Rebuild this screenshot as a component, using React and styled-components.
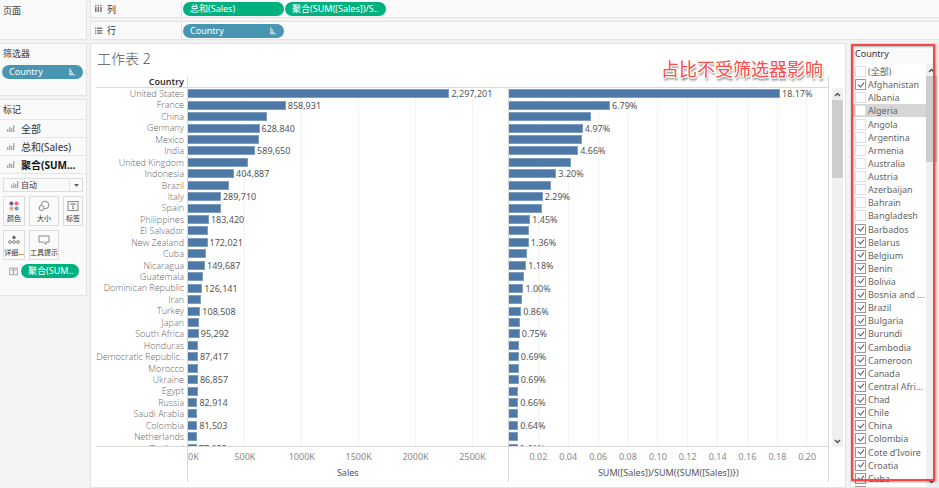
import React, { useState } from 'react';
import styled, { createGlobalStyle } from 'styled-components';

const GlobalStyle = createGlobalStyle`
	* {
		box-sizing: border-box;
	}
	body {
		margin: 0;
		background: #f3f3f3;
		font-family: 'Noto Sans', 'Noto Sans CJK SC', sans-serif;
		font-size: 9px;
		color: #333;
	}
	button, select, input {
		font: inherit;
		color: inherit;
		margin: 0;
	}
`;

const Workbook = styled.div`
	display: grid;
	grid-template-columns: 87px minmax(0, 1fr);
	gap: 3px;
	height: 100vh;
	overflow: hidden;
`;

const Sidebar = styled.aside`
	display: flex;
	flex-direction: column;
	gap: 3px;
`;

const Card = styled.section`
	background: #fafafa;
	border: 1px solid #e3e3e3;
	border-left: none;
	border-top-color: ${(props) => (props.$first ? 'transparent' : '#e3e3e3')};
	min-height: ${(props) => props.$height}px;
`;

const CardTitle = styled.h2`
	margin: 0;
	padding: 0 3px;
	font-size: 9px;
	font-weight: 400;
	line-height: 19px;
`;

const Pill = styled.button`
	display: flex;
	align-items: center;
	justify-content: space-between;
	width: ${(props) => props.$width}px;
	height: 14px;
	padding: 0 7px;
	border: none;
	border-radius: 7px;
	background: ${(props) => (props.$measure ? '#00b180' : '#4996b2')};
	color: #fff;
	font-size: 9px;
	line-height: 14px;
	white-space: nowrap;
`;

const FilterPillRow = styled.div`
	padding: 2px;
`;

const MarkLayer = styled.button`
	display: flex;
	align-items: center;
	gap: 6px;
	width: 100%;
	height: 18px;
	padding: 0 7px;
	border: none;
	border-top: 1px solid #e6e6e6;
	background: none;
	font-size: 10px;
	font-weight: ${(props) => (props.$active ? 700 : 400)};
	color: ${(props) => (props.$active ? '#111' : '#333')};
	white-space: nowrap;
`;

const MarkTools = styled.div`
	display: flex;
	flex-direction: column;
	gap: 4px;
	padding: 4px 3px;
	border-top: 1px solid #e6e6e6;
`;

const SelectBox = styled.label`
	position: relative;
	display: block;
	height: 14px;
	border: 1px solid #ddd;
	background: #fafafa;

	select {
		display: block;
		width: 100%;
		height: 12px;
		padding: 0 0 0 17px;
		border: none;
		background: none;
		appearance: none;
		font-size: 8px;
		line-height: 12px;
	}
`;

const SelectIcon = styled.span`
	position: absolute;
	top: 2px;
	left: 7px;
	display: flex;
	pointer-events: none;
`;

const SelectArrow = styled.span`
	position: absolute;
	top: 0;
	right: 0;
	display: flex;
	align-items: center;
	justify-content: center;
	width: 13px;
	height: 12px;
	border-left: 1px solid #e3e3e3;
	pointer-events: none;
`;

const ToolGrid = styled.div`
	display: grid;
	grid-template-columns: 22px 30px 20px;
	gap: 4px;
`;

const ToolButton = styled.button`
	display: flex;
	flex-direction: column;
	align-items: center;
	justify-content: space-between;
	height: 30px;
	padding: 3px 0 0;
	border: 1px solid #ddd;
	background: #fafafa;
	font-size: 7px;
	line-height: 12px;
	white-space: nowrap;
`;

const MarkPillRow = styled.div`
	display: flex;
	align-items: center;
	gap: 3px;
	padding-left: 6px;
`;

const Workspace = styled.div`
	display: flex;
	flex-direction: column;
	gap: 3px;
	min-width: 0;
	min-height: 0;
`;

const Shelf = styled.div`
	display: flex;
	align-items: center;
	gap: 1px;
	height: ${(props) => props.$height}px;
	flex-shrink: 0;
	background: #fafafa;
	border: 1px solid #e3e3e3;
	border-right: none;
	border-top-color: ${(props) => (props.$first ? 'transparent' : '#e3e3e3')};
`;

const ShelfName = styled.div`
	display: flex;
	align-items: center;
	gap: 4px;
	width: 91px;
	align-self: stretch;
	padding-left: 4px;
	border-right: 1px solid #e3e3e3;
`;

const Body = styled.div`
	display: grid;
	grid-template-columns: minmax(0, 1fr) 88px;
	gap: 4px;
	flex: 1;
	min-height: 0;
	padding-right: 1px;
`;

const Sheet = styled.main`
	position: relative;
	display: flex;
	flex-direction: column;
	min-height: 0;
	padding: 5px 2px 5px 5px;
	background: #fff;
	border: 1px solid #e3e3e3;
`;

const SheetTitle = styled.h1`
	margin: 0;
	padding-left: 1px;
	font-size: 14px;
	font-weight: 300;
	line-height: 20px;
	color: #555;
`;

const Annotation = styled.div`
	position: absolute;
	top: 12px;
	right: 22px;
	font-size: 18px;
	line-height: 26px;
	color: #fb4b4b;
	text-shadow: -1px -1px 0 #fff, 1px -1px 0 #fff, -1px 1px 0 #fff,
		1px 1px 0 #fff, 1px 3px 2px #777;
`;

const Chart = styled.div`
	display: grid;
	grid-template-columns: 92px minmax(0, 1fr) minmax(0, 1fr) 14px;
	grid-template-rows: 12px minmax(0, 1fr) 35px;
	flex: 1;
	min-height: 0;
	margin-top: 7px;
`;

const HeadCell = styled.div`
	padding-right: 3px;
	border-right: ${(props) => (props.$line ? '1px solid #d9d9d9' : 'none')};
	border-bottom: 1px solid #d9d9d9;
	font-weight: 600;
	line-height: 12px;
	text-align: right;
`;

const Pane = styled.div`
	overflow: hidden;
	border-right: 1px solid #d9d9d9;
	border-bottom: 1px solid #d9d9d9;
	background: ${(props) =>
		props.$step
			? `repeating-linear-gradient(to right, transparent 0 calc(${props.$step}% - 1px), #f3f3f3 calc(${props.$step}% - 1px) ${props.$step}%)`
			: 'none'};
`;

const Rows = styled.div`
	display: grid;
	grid-template-columns: minmax(0, 1fr);
	grid-template-rows: repeat(32, 1fr);
	height: 366px;
`;

const RowName = styled.div`
	display: flex;
	justify-content: flex-end;
	min-height: 0;
	padding-right: 3px;
	font-family: 'Open Sans', 'Noto Sans', sans-serif;
	font-weight: 300;
	line-height: 12px;
	white-space: nowrap;
	color: #666;
`;

const BarRow = styled.div`
	display: flex;
	align-items: center;
	gap: 2px;
	min-height: 0;
	line-height: 11px;
	color: #555;
`;

const Bar = styled.div`
	height: 9px;
	background: #4e79a7;
	border: 1px solid #7f9fc2;
	border-left: none;
`;

const AxisCell = styled.div`
	border-right: 1px solid #d9d9d9;
	text-align: center;
	line-height: 12px;
	color: #555;
`;

const Ticks = styled.div`
	display: flex;
	padding: 4px 0;
	color: #8a8a8a;
`;

const Tick = styled.span`
	flex: 0 0 ${(props) => props.$size}%;
	display: flex;
	justify-content: ${(props) => (props.$start ? 'flex-start' : 'center')};
`;

const ScrollTrack = styled.div`
	display: flex;
	flex-direction: column;
	justify-content: space-between;
	align-items: center;
	width: 11px;
	justify-self: end;
	background: #f0f0f0;
`;

const ScrollThumb = styled.div`
	width: 100%;
	height: ${(props) => props.$height}px;
	background: #cdcdcd;
`;

const ScrollButton = styled.button`
	display: flex;
	align-items: center;
	justify-content: center;
	width: 100%;
	height: 12px;
	padding: 0;
	border: none;
	background: none;
`;

const FilterPanel = styled.aside`
	position: relative;
	display: flex;
	flex-direction: column;
	min-height: 0;
	background: #fff;
	border: 1px solid #e3e3e3;
`;

const FilterTitle = styled.h2`
	margin: 0;
	padding: 0 4px;
	background: #fafafa;
	font-size: 9px;
	font-weight: 400;
	line-height: 20px;
`;

const FilterBody = styled.div`
	display: flex;
	flex: 1;
	min-height: 0;
	overflow: hidden;
`;

const FilterList = styled.div`
	display: grid;
	grid-template-columns: minmax(0, 1fr);
	grid-template-rows: repeat(33, 1fr);
	flex: 1;
	min-width: 0;
	height: 434px;
	padding-top: 1px;
`;

const FilterItem = styled.label`
	display: flex;
	align-items: center;
	gap: 2px;
	min-height: 0;
	padding-left: 4px;
	line-height: 13px;
	white-space: nowrap;
	color: #666;
	background: ${(props) => (props.$hover ? '#d6d6d6' : 'transparent')};
`;

const CheckBox = styled.input`
	display: flex;
	align-items: center;
	justify-content: center;
	width: 11px;
	height: 11px;
	appearance: none;
	background: #fff;
	border: 1px solid #e0e0e0;

	&:checked {
		border-color: #999;
	}
	&:checked::after {
		content: '';
		width: 3px;
		height: 5px;
		margin-bottom: 2px;
		border: solid #555;
		border-width: 0 1px 1px 0;
		transform: rotate(40deg);
	}
`;

const RedFrame = styled.div`
	position: absolute;
	top: 0;
	left: 0;
	right: 2px;
	bottom: 6px;
	border: 2px solid #f4484a;
	box-shadow: 1px 1px 2px rgba(0, 0, 0, 0.4),
		inset 1px 1px 2px rgba(0, 0, 0, 0.3);
	pointer-events: none;
`;

const BarsIcon = () => (
	<svg width="8" height="8" viewBox="0 0 8 8" fill="#aaa">
		<rect x="0" y="4" width="1.4" height="3" />
		<rect x="2" y="2" width="1.4" height="5" />
		<rect x="4" y="3" width="1.4" height="4" />
		<rect x="6" y="0" width="1.4" height="7" />
	</svg>
);

const ColumnsIcon = () => (
	<svg width="8" height="8" viewBox="0 0 8 8" fill="#777">
		{[0, 2.6, 5.2].map((x) => (
			<g key={x}>
				<rect x={x} y="0" width="1.5" height="1.2" />
				<rect x={x} y="2" width="1.5" height="5" />
			</g>
		))}
	</svg>
);

const RowsIcon = () => (
	<svg width="8" height="8" viewBox="0 0 8 8" fill="#777">
		{[0.5, 3, 5.5].map((y) => (
			<g key={y}>
				<rect x="0" y={y} width="1.2" height="1.4" />
				<rect x="2" y={y} width="5.2" height="1.4" />
			</g>
		))}
	</svg>
);

const SortIcon = () => (
	<svg width="8" height="8" viewBox="0 0 8 8" fill="#fff">
		<rect x="1" y="0.6" width="1.6" height="1" />
		<rect x="1" y="2.6" width="3" height="1" />
		<rect x="1" y="4.6" width="4" height="1" />
		<rect x="1" y="6.4" width="6" height="0.8" />
	</svg>
);

const ColorIcon = () => (
	<svg width="12" height="12" viewBox="0 0 12 12">
		<circle cx="3.4" cy="3.4" r="2" fill="#7a5c8a" />
		<circle cx="8.6" cy="3.4" r="2" fill="#f0686c" />
		<circle cx="3.4" cy="8.6" r="2" fill="#f5a26b" />
		<circle cx="8.6" cy="8.6" r="2" fill="#6a9bc8" />
	</svg>
);

const SizeIcon = () => (
	<svg width="12" height="12" viewBox="0 0 12 12" fill="none" stroke="#888">
		<circle cx="7" cy="5" r="3.8" />
		<circle cx="3.6" cy="8" r="2.5" fill="#fafafa" />
	</svg>
);

const TextIcon = ({ size }) => (
	<svg width={size} height={size} viewBox="0 0 12 12" fill="none" stroke="#888">
		<rect x="1" y="1.5" width="10" height="9" />
		<path d="M3.8 5V3.8h4.4V5M6 3.8v4.6M5 8.4h2" />
	</svg>
);

const DetailIcon = () => (
	<svg width="12" height="12" viewBox="0 0 12 12" fill="none" stroke="#888">
		<circle cx="6" cy="3.5" r="1.3" fill="#666" stroke="#666" />
		<circle cx="2" cy="8" r="1.4" />
		<circle cx="6" cy="8" r="1.4" />
		<circle cx="10" cy="8" r="1.4" />
	</svg>
);

const TooltipIcon = () => (
	<svg width="12" height="12" viewBox="0 0 12 12" fill="none" stroke="#888">
		<path d="M1 2h10v6H8V10.5L5.6 8H1z" />
	</svg>
);

const Chevron = ({ down }) => (
	<svg width="7" height="5" viewBox="0 0 7 5" fill="none" stroke="#555" strokeWidth="1.5">
		<path d={down ? 'M1 1l2.5 2.5L6 1' : 'M1 4l2.5-2.5L6 4'} />
	</svg>
);

const countries = [
	['United States', 2297201],
	['France', 858931],
	['China', 697000],
	['Germany', 628840],
	['Mexico', 621000],
	['India', 589650],
	['United Kingdom', 528000],
	['Indonesia', 404887],
	['Brazil', 361000],
	['Italy', 289710],
	['Spain', 287000],
	['Philippines', 183420],
	['El Salvador', 177000],
	['New Zealand', 172021],
	['Cuba', 160000],
	['Nicaragua', 149687],
	['Guatemala', 130000],
	['Dominican Republic', 126141],
	['Iran', 114000],
	['Turkey', 108508],
	['Japan', 98000],
	['South Africa', 95292],
	['Honduras', 90000],
	['Democratic Republic..', 87417],
	['Morocco', 87000],
	['Ukraine', 86857],
	['Egypt', 84000],
	['Russia', 82914],
	['Saudi Arabia', 82000],
	['Colombia', 81503],
	['Netherlands', 78000],
	['Thailand', 77052],
];

const totalSales = 12642900;

const filterItems = [
	'(全部)', 'Afghanistan', 'Albania', 'Algeria', 'Angola', 'Argentina',
	'Armenia', 'Australia', 'Austria', 'Azerbaijan', 'Bahrain', 'Bangladesh',
	'Barbados', 'Belarus', 'Belgium', 'Benin', 'Bolivia', 'Bosnia and ...',
	'Brazil', 'Bulgaria', 'Burundi', 'Cambodia', 'Cameroon', 'Canada',
	'Central Afri...', 'Chad', 'Chile', 'China', 'Colombia', 'Cote d’Ivoire',
	'Croatia', 'Cuba', 'Denmark',
];

const BarPane = ({ max, step, value, format }) => (
	<Pane $step={step}>
		<Rows>
			{countries.map(([name, sales], i) => (
				<BarRow key={name}>
					<Bar style={{ width: `${(value(sales) / max) * 100}%` }} />
					{(i === 0 || i % 2 === 1) && <span>{format(value(sales))}</span>}
				</BarRow>
			))}
		</Rows>
	</Pane>
);

const Axis = ({ first, ticks, step, title }) => (
	<AxisCell>
		<Ticks>
			<Tick $size={step / 2} $start>
				{first}
			</Tick>
			{ticks.map((tick) => (
				<Tick key={tick} $size={step}>
					{tick}
				</Tick>
			))}
		</Ticks>
		{title}
	</AxisCell>
);

const Scrollbar = ({ thumb }) => (
	<ScrollTrack>
		<div style={{ width: '100%' }}>
			<ScrollButton aria-label="Scroll up">
				<Chevron />
			</ScrollButton>
			<ScrollThumb $height={thumb} />
		</div>
		<ScrollButton aria-label="Scroll down">
			<Chevron down />
		</ScrollButton>
	</ScrollTrack>
);

const CountryFilter = () => {
	const [checked, setChecked] = useState(
		filterItems.filter((name, i) => i === 1 || i > 11)
	);
	const toggle = (name) => {
		setChecked(
			checked.includes(name)
				? checked.filter((item) => item !== name)
				: [...checked, name]
		);
	};
	return (
		<FilterPanel>
			<FilterTitle>Country</FilterTitle>
			<FilterBody>
				<FilterList>
					{filterItems.map((name) => (
						<FilterItem key={name} $hover={name === 'Algeria'}>
							<CheckBox
								type="checkbox"
								checked={checked.includes(name)}
								onChange={() => toggle(name)}
							/>
							{name}
						</FilterItem>
					))}
				</FilterList>
				<Scrollbar thumb={86} />
			</FilterBody>
			<RedFrame />
		</FilterPanel>
	);
};

export default function App() {
	return (
		<>
			<GlobalStyle />
			<Workbook>
				<Sidebar>
					<Card $height={40} $first>
						<CardTitle>页面</CardTitle>
					</Card>
					<Card $height={53}>
						<CardTitle>筛选器</CardTitle>
						<FilterPillRow>
							<Pill $width={81}>
								Country <SortIcon />
							</Pill>
						</FilterPillRow>
					</Card>
					<Card $height={197}>
						<CardTitle>标记</CardTitle>
						<MarkLayer>
							<BarsIcon /> 全部
						</MarkLayer>
						<MarkLayer>
							<BarsIcon /> 总和(Sales)
						</MarkLayer>
						<MarkLayer $active>
							<BarsIcon /> 聚合(SUM...
						</MarkLayer>
						<MarkTools>
							<SelectBox>
								<SelectIcon>
									<BarsIcon />
								</SelectIcon>
								<select aria-label="标记">
									<option>自动</option>
								</select>
								<SelectArrow>
									<svg width="5" height="3" viewBox="0 0 5 3" fill="#666">
										<path d="M0 0h5L2.5 3z" />
									</svg>
								</SelectArrow>
							</SelectBox>
							<ToolGrid>
								<ToolButton><ColorIcon />颜色</ToolButton>
								<ToolButton><SizeIcon />大小</ToolButton>
								<ToolButton><TextIcon size={12} />标签</ToolButton>
								<ToolButton><DetailIcon />详细...</ToolButton>
								<ToolButton><TooltipIcon />工具提示</ToolButton>
							</ToolGrid>
							<MarkPillRow>
								<TextIcon size={9} />
								<Pill $measure $width={58}>聚合(SUM..</Pill>
							</MarkPillRow>
						</MarkTools>
					</Card>
				</Sidebar>
				<Workspace>
					<Shelf $height={18} $first>
						<ShelfName>
							<ColumnsIcon /> 列
						</ShelfName>
						<Pill $measure $width={101}>总和(Sales)</Pill>
						<Pill $measure $width={101}>聚合(SUM([Sales])/S..</Pill>
					</Shelf>
					<Shelf $height={19}>
						<ShelfName>
							<RowsIcon /> 行
						</ShelfName>
						<Pill $width={101}>
							Country <SortIcon />
						</Pill>
					</Shelf>
					<Body>
						<Sheet>
							<SheetTitle>工作表 2</SheetTitle>
							<Chart>
								<HeadCell $line>Country</HeadCell>
								<HeadCell />
								<HeadCell $line />
								<span />
								<Pane>
									<Rows>
										{countries.map(([name]) => (
											<RowName key={name}>{name}</RowName>
										))}
									</Rows>
								</Pane>
								<BarPane
									max={2807000}
									step={17.81}
									value={(sales) => sales}
									format={(n) => n.toLocaleString('en-US')}
								/>
								<BarPane
									max={0.2138}
									step={9.354}
									value={(sales) => sales / totalSales}
									format={(n) => `${(n * 100).toFixed(2)}%`}
								/>
								<Scrollbar thumb={78} />
								<AxisCell />
								<Axis
									first="0K"
									step={17.81}
									ticks={['500K', '1000K', '1500K', '2000K', '2500K']}
									title="Sales"
								/>
								<Axis
									step={9.354}
									ticks={['0.02', '0.04', '0.06', '0.08', '0.10', '0.12', '0.14', '0.16', '0.18', '0.20']}
									title="SUM([Sales])/SUM({SUM([Sales])})"
								/>
							</Chart>
							<Annotation>占比不受筛选器影响</Annotation>
						</Sheet>
						<CountryFilter />
					</Body>
				</Workspace>
			</Workbook>
		</>
	);
}
